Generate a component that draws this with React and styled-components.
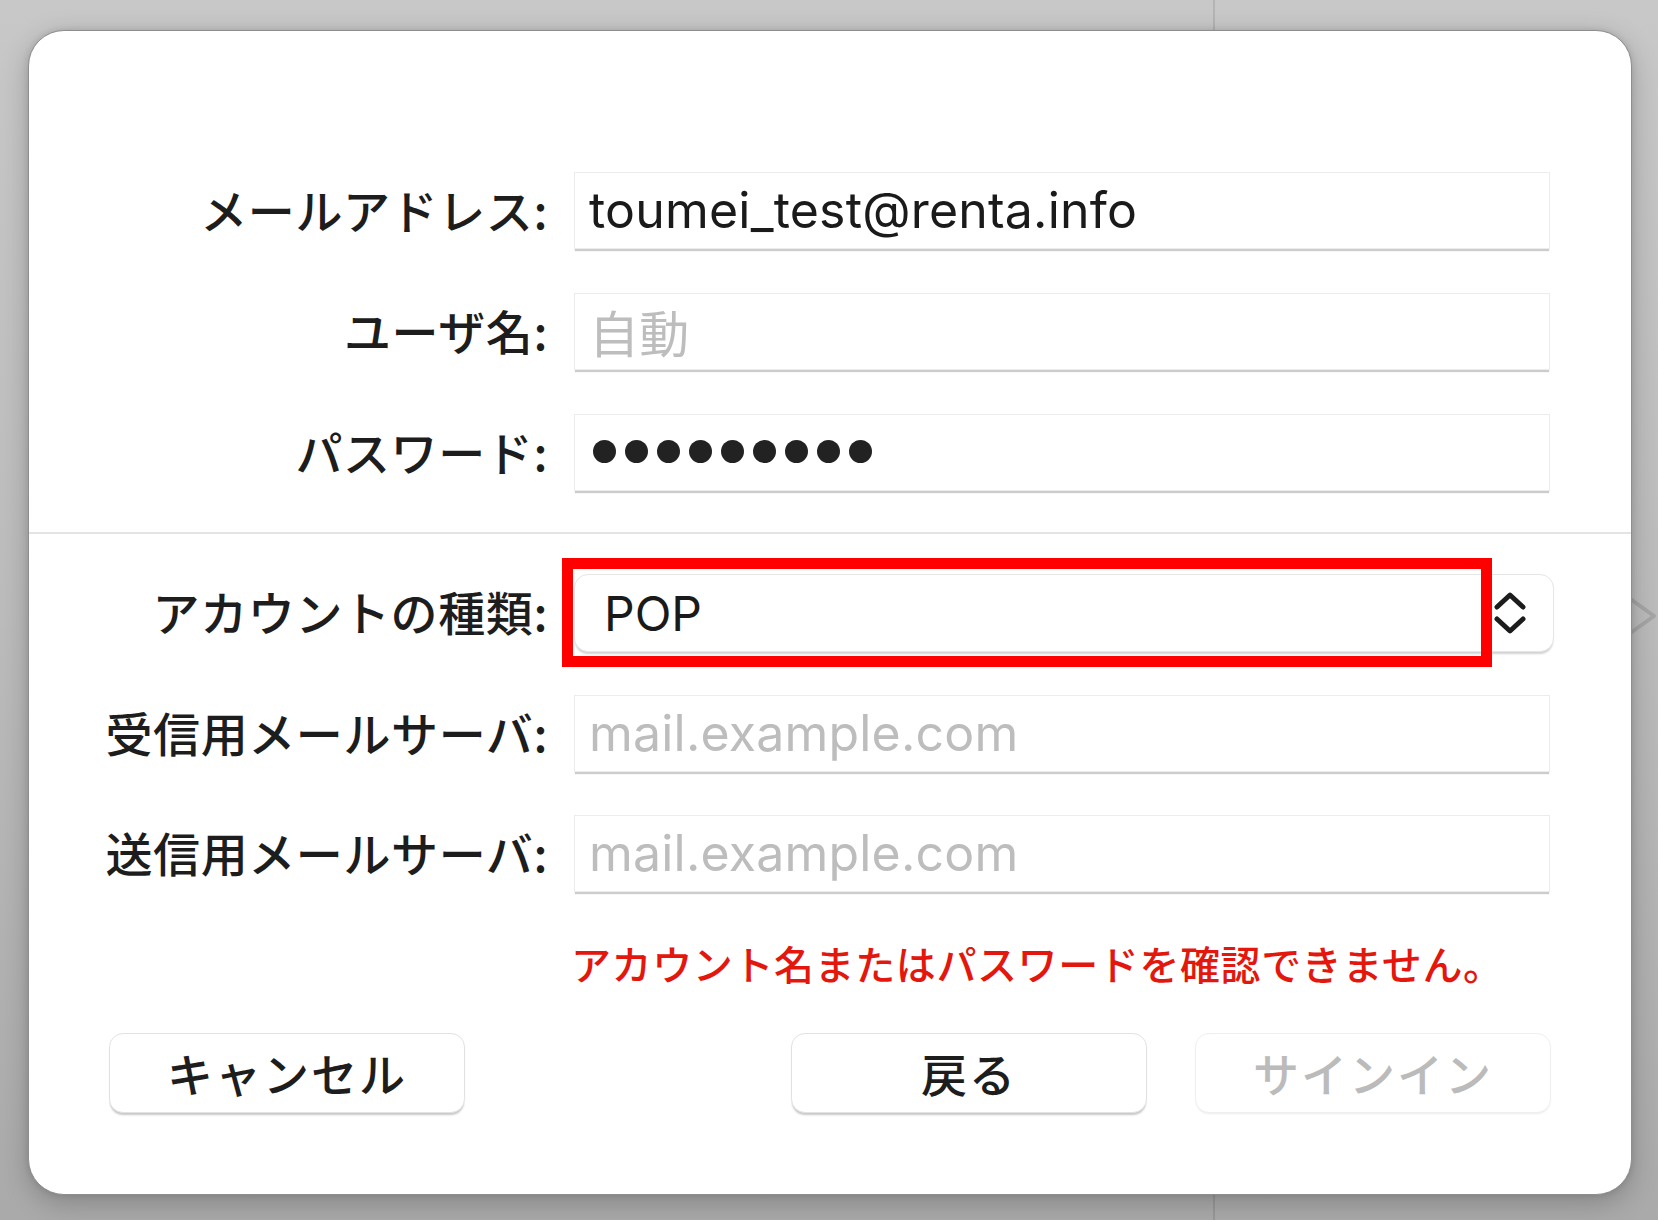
import React from "react";
import styled, { createGlobalStyle } from "styled-components";

const Global = createGlobalStyle`
  html, body { margin: 0; padding: 0; }
  body { font-family: "Noto Sans CJK JP", sans-serif; }
  * { box-sizing: border-box; }
`;

const Page = styled.div`
  position: relative;
  width: 1658px;
  height: 1220px;
  overflow: hidden;
  padding: 30px 26px 25px 28px;
  background:
    linear-gradient(90deg, transparent 1213px, rgba(0,0,0,0.10) 1213px, rgba(0,0,0,0.10) 1215px, transparent 1215px),
    linear-gradient(180deg, #c8c8c8 0%, #bcbcbc 50%, #aaaaaa 100%);
`;

const BgChevron = styled.svg`
  position: absolute;
  left: 1610px;
  top: 586px;
  z-index: 0;
`;

const Dialog = styled.div`
  position: relative;
  z-index: 1;
  width: 1604px;
  height: 1165px;
  background: #ffffff;
  border: 1px solid #8e8e8e;
  border-radius: 36px;
  box-shadow: 0 8px 28px rgba(0, 0, 0, 0.22), 0 0 6px rgba(0, 0, 0, 0.12);
  display: flex;
  flex-direction: column;
`;

const Section = styled.div`
  display: flex;
  flex-direction: column;
  gap: ${(p) => p.$gap || 44}px;
  padding-top: ${(p) => p.$top}px;
  padding-bottom: ${(p) => p.$bottom || 0}px;
`;

const Separator = styled.div`
  height: 2px;
  background: #e4e4e4;
`;

const Row = styled.div`
  display: flex;
  align-items: center;
  gap: 26px;
`;

const Label = styled.div`
  width: 519px;
  padding-bottom: 4px;
  text-align: right;
  font-family: "Noto Sans CJK JP", sans-serif;
  font-size: 47px;
  font-weight: 500;
  line-height: 60px;
  color: #1d1d1d;
  white-space: nowrap;
  letter-spacing: 0.6px;
`;

const Field = styled.div`
  width: 976px;
  height: 77px;
  display: flex;
  align-items: center;
  padding-left: 14px;
  padding-bottom: 2px;
  background: #ffffff;
  border: 1px solid #ececec;
  box-shadow: 0 3px 1px -1px rgba(0, 0, 0, 0.2);
  font-family: Inter, "Noto Sans CJK JP", sans-serif;
  font-size: 50px;
  letter-spacing: 0.2px;
  color: ${(p) => (p.$placeholder ? "#bdbdbd" : "#1a1a1a")};
  white-space: nowrap;
`;

const Dots = styled.div`
  display: flex;
  gap: 9px;
  padding-left: 4px;
`;

const Dot = styled.span`
  width: 23px;
  height: 23px;
  border-radius: 50%;
  background: #222222;
`;

const PopupWrap = styled.div`
  position: relative;
  width: 980px;
`;

const Popup = styled.div`
  height: 78px;
  display: flex;
  align-items: center;
  justify-content: space-between;
  padding: 0 26px 0 29px;
  background: #ffffff;
  border: 1px solid #e6e6e6;
  border-radius: 14px;
  box-shadow: 0 3px 2px -1px rgba(0, 0, 0, 0.18);
  font-family: Inter, sans-serif;
  font-size: 48px;
  color: #1a1a1a;
`;

const Highlight = styled.div`
  position: absolute;
  left: -12px;
  top: -16px;
  width: 930px;
  height: 109px;
  border: 11px solid #ff0000;
  pointer-events: none;
`;

const ErrorText = styled.div`
  margin-top: 46px;
  padding-left: 542px;
  font-family: "Noto Sans CJK JP", sans-serif;
  font-size: 40px;
  font-weight: 500;
  letter-spacing: 0.6px;
  line-height: 50px;
  color: #e3170d;
  white-space: nowrap;
`;

const ButtonBar = styled.div`
  display: flex;
  align-items: center;
  gap: 48px;
  margin-top: 45px;
  padding: 0 80px;
`;

const Spacer = styled.div`
  flex: 1;
`;

const Button = styled.div`
  width: 356px;
  height: 80px;
  display: flex;
  align-items: center;
  justify-content: center;
  padding-bottom: 3px;
  background: #ffffff;
  border: 1px solid ${(p) => (p.$disabled ? "#efefef" : "#e2e2e2")};
  border-radius: 14px;
  box-shadow: ${(p) =>
    p.$disabled
      ? "0 2px 2px -1px rgba(0,0,0,0.08)"
      : "0 3px 2px -1px rgba(0,0,0,0.22)"};
  font-family: "Noto Sans CJK JP", sans-serif;
  font-size: 46px;
  font-weight: 500;
  letter-spacing: 2px;
  color: ${(p) => (p.$disabled ? "#bbbbbb" : "#1d1d1d")};
`;

function UpDown() {
  return (
    <svg width="34" height="48" viewBox="0 0 34 48" fill="none">
      <path d="M4 18 L17 6 L30 18" stroke="#1c1c1c" strokeWidth="5" strokeLinecap="round" strokeLinejoin="round" />
      <path d="M4 30 L17 42 L30 30" stroke="#1c1c1c" strokeWidth="5" strokeLinecap="round" strokeLinejoin="round" />
    </svg>
  );
}

export default function App() {
  return (
    <Page>
      <Global />
      <BgChevron width="48" height="60" viewBox="0 0 48 60" fill="none">
        <path d="M8 4 L44 30 L8 56" stroke="#a6a6a6" strokeWidth="4" strokeLinecap="round" strokeLinejoin="round" />
      </BgChevron>
      <Dialog>
        <Section $top={141} $bottom={41}>
          <Row>
            <Label>メールアドレス:</Label>
            <Field>toumei_test@renta.info</Field>
          </Row>
          <Row>
            <Label>ユーザ名:</Label>
            <Field $placeholder>自動</Field>
          </Row>
          <Row>
            <Label>パスワード:</Label>
            <Field>
              <Dots>
                {Array.from({ length: 9 }).map((_, i) => (
                  <Dot key={i} />
                ))}
              </Dots>
            </Field>
          </Row>
        </Section>
        <Separator />
        <Section $top={40} $gap={43}>
          <Row>
            <Label>アカウントの種類:</Label>
            <PopupWrap>
              <Popup>
                <span>POP</span>
                <UpDown />
              </Popup>
              <Highlight />
            </PopupWrap>
          </Row>
          <Row>
            <Label>受信用メールサーバ:</Label>
            <Field $placeholder>mail.example.com</Field>
          </Row>
          <Row>
            <Label>送信用メールサーバ:</Label>
            <Field $placeholder>mail.example.com</Field>
          </Row>
        </Section>
        <ErrorText>アカウント名またはパスワードを確認できません。</ErrorText>
        <ButtonBar>
          <Button>キャンセル</Button>
          <Spacer />
          <Button>戻る</Button>
          <Button $disabled>サインイン</Button>
        </ButtonBar>
      </Dialog>
    </Page>
  );
}
